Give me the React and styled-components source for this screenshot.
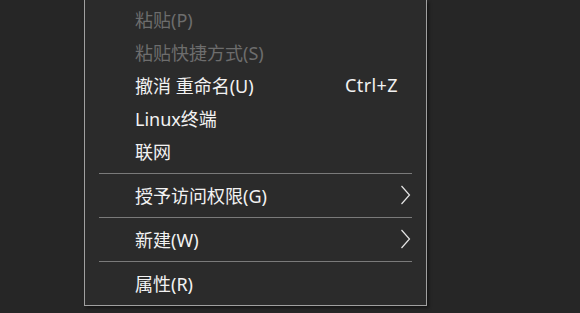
import React from 'react';
import styled, { createGlobalStyle } from 'styled-components';

const GlobalStyle = createGlobalStyle`
  html, body {
    margin: 0;
    padding: 0;
    background: #262626;
    height: 100%;
    overflow: hidden;
  }
  #root {
    height: 100%;
  }
`;

const Desktop = styled.div`
  display: flex;
  align-items: flex-start;
  height: 100%;
  padding-left: 84px;
  font-family: 'Noto Sans', 'Noto Sans CJK SC', sans-serif;
`;

const Menu = styled.div`
  width: 341px;
  background: #2b2b2b;
  border: 1px solid #a0a0a0;
  border-top: none;
  padding: 2px 0 6px;
  box-shadow: 2px 2px 3px rgba(0, 0, 0, 0.45);
`;

const Item = styled.div`
  display: flex;
  align-items: center;
  height: 33px;
  padding-left: 50px;
  padding-right: 15px;
  font-size: 18px;
  color: ${props => (props.disabled ? '#6d6d6d' : '#f2f2f2')};
`;

const Label = styled.span`
  flex: 1;
  white-space: nowrap;
`;

const Shortcut = styled.span`
  padding-right: 13px;
  letter-spacing: 0.4px;
  white-space: nowrap;
`;

const Arrow = styled.svg`
  width: 11px;
  height: 20px;
  display: block;
`;

const Separator = styled.div`
  height: 1px;
  margin: 6px 14px 4px 14px;
  background: #7a7a7a;
`;

const Chevron = () => (
  <Arrow viewBox="0 0 11 20">
    <path d="M1.5 1 L9.5 10 L1.5 19" fill="none" stroke="#e6e6e6" strokeWidth="1.2" />
  </Arrow>
);

const items = [
  { label: '粘贴(P)', disabled: true },
  { label: '粘贴快捷方式(S)', disabled: true },
  { label: '撤消 重命名(U)', shortcut: 'Ctrl+Z' },
  { label: 'Linux终端' },
  { label: '联网' },
  { sep: true },
  { label: '授予访问权限(G)', sub: true },
  { sep: true },
  { label: '新建(W)', sub: true },
  { sep: true },
  { label: '属性(R)' },
];

export default function App() {
  return (
    <Desktop>
      <GlobalStyle />
      <Menu>
        {items.map((it, i) =>
          it.sep ? (
            <Separator key={i} />
          ) : (
            <Item key={i} disabled={it.disabled}>
              <Label>{it.label}</Label>
              {it.shortcut && <Shortcut>{it.shortcut}</Shortcut>}
              {it.sub && <Chevron />}
            </Item>
          )
        )}
      </Menu>
    </Desktop>
  );
}
